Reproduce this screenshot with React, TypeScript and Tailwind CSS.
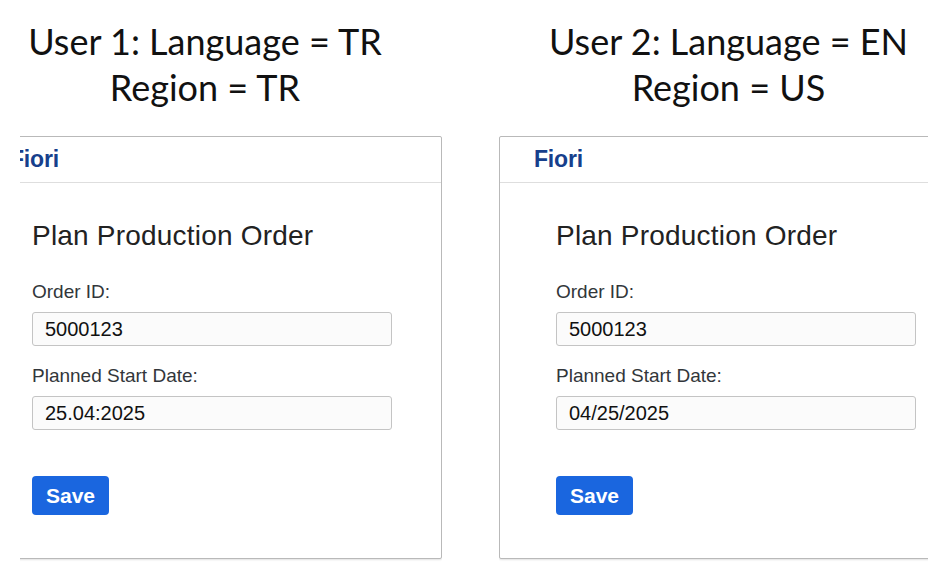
import React from "react";

type Profile = {
  language: string;
  region: string;
  user: string;
  date: string;
};

const users: Profile[] = [
  { user: "User 1", language: "TR", region: "TR", date: "25.04:2025" },
  { user: "User 2", language: "EN", region: "US", date: "04/25/2025" },
];

const cardFont = { fontFamily: '"Liberation Sans", Arial, sans-serif' };

function OrderCard({ date }: { date: string }) {
  return (
    <div
      className="w-[467px] h-[423px] shrink-0 bg-white border border-[#b9b9b9] rounded-[2px] shadow-[0_1px_2px_rgba(0,0,0,0.12)] flex flex-col"
      style={cardFont}
    >
      <div className="h-[46px] shrink-0 border-b border-[#dedede] flex items-center pl-[34px]">
        <span className="text-[23px] font-bold tracking-[-0.2px] text-[#173f8c]">Fiori</span>
      </div>
      <div className="pl-[56px] pt-[36px] flex flex-col">
        <h1 className="text-[28px] leading-[34px] text-[#222] tracking-[0.2px]">Plan Production Order</h1>
        <label className="mt-[27px] text-[19px] leading-[24px] text-[#32363a]">Order ID:</label>
        <div className="mt-[8px] w-[360px] h-[34px] rounded-[3px] border border-[#c4c4c4] bg-[#fbfbfb] flex items-center pl-[12px] text-[20px] text-[#111]">
          5000123
        </div>
        <label className="mt-[18px] text-[19px] leading-[24px] text-[#32363a]">Planned Start Date:</label>
        <div className="mt-[8px] w-[360px] h-[34px] rounded-[3px] border border-[#c4c4c4] bg-[#fbfbfb] flex items-center pl-[12px] text-[20px] text-[#111]">
          {date}
        </div>
        <button className="mt-[46px] w-[77px] h-[39px] rounded-[4px] bg-[#1a66df] text-white text-[21px] font-bold flex items-center justify-center">
          Save
        </button>
      </div>
    </div>
  );
}

function Heading({ p }: { p: Profile }) {
  return (
    <div
      className="text-center text-[36px] leading-[46px] text-[#111]"
      style={{ fontFamily: 'Lato, "Open Sans", sans-serif' }}
    >
      <div>
        {p.user}: Language = {p.language}
      </div>
      <div>Region = {p.region}</div>
    </div>
  );
}

export default function App() {
  return (
    <div className="w-[945px] h-[564px] bg-white overflow-hidden flex flex-col">
      <div className="flex pt-[18px] h-[136px] shrink-0">
        <div className="w-[410px]">
          <Heading p={users[0]} />
        </div>
        <div className="ml-[106px] w-[425px]">
          <Heading p={users[1]} />
        </div>
      </div>
      <div className="flex">
        <div className="ml-[20px] w-[422px] overflow-hidden shrink-0">
          <div className="-ml-[45px] pb-[4px]">
            <OrderCard date={users[0].date} />
          </div>
        </div>
        <div className="ml-[57px] w-[429px] overflow-hidden shrink-0 pb-[4px]">
          <OrderCard date={users[1].date} />
        </div>
      </div>
    </div>
  );
}
